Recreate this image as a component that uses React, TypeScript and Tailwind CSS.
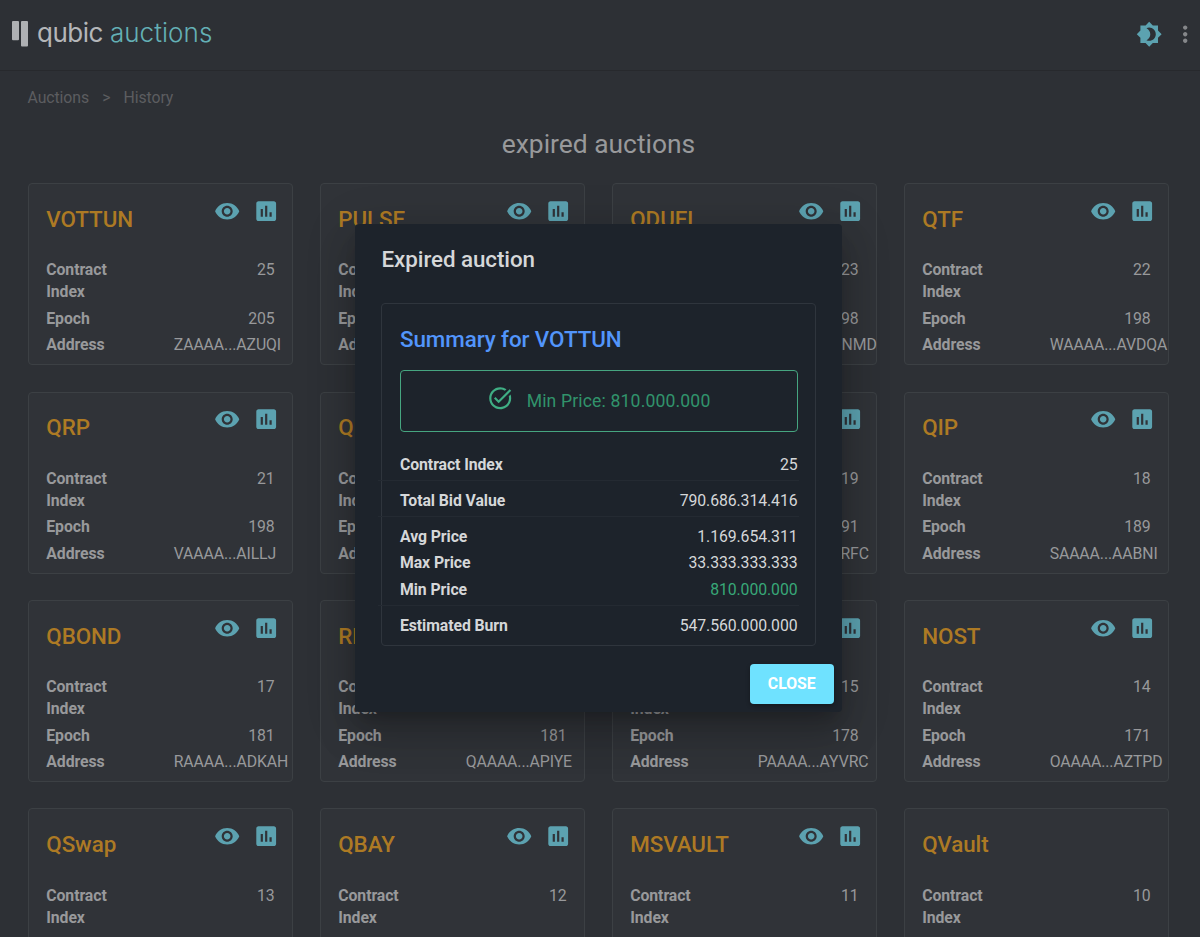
import React from "react";
import {
  MdBrightness4,
  MdInsertChart,
  MdMoreVert,
  MdTaskAlt,
  MdVisibility,
} from "react-icons/md";

type Auction = { name: string; index: number; epoch: number; address: string };

const auctions: Auction[] = [
  { name: "VOTTUN", index: 25, epoch: 205, address: "ZAAAA...AZUQI" },
  { name: "PULSE", index: 24, epoch: 199, address: "YAAAA...AXUXG" },
  { name: "QDUEL", index: 23, epoch: 198, address: "XAAAA...AONMD" },
  { name: "QTF", index: 22, epoch: 198, address: "WAAAA...AVDQA" },
  { name: "QRP", index: 21, epoch: 198, address: "VAAAA...AILLJ" },
  { name: "QRWA", index: 20, epoch: 197, address: "UAAAA...AQRHE" },
  { name: "QRAFFLE", index: 19, epoch: 191, address: "TAAAA...AORFC" },
  { name: "QIP", index: 18, epoch: 189, address: "SAAAA...AABNI" },
  { name: "QBOND", index: 17, epoch: 181, address: "RAAAA...ADKAH" },
  { name: "RL", index: 16, epoch: 181, address: "QAAAA...APIYE" },
  { name: "QDRAW", index: 15, epoch: 178, address: "PAAAA...AYVRC" },
  { name: "NOST", index: 14, epoch: 171, address: "OAAAA...AZTPD" },
  { name: "QSwap", index: 13, epoch: 170, address: "NAAAA...AMAEF" },
  { name: "QBAY", index: 12, epoch: 154, address: "MAAAA...AOKXB" },
  { name: "MSVAULT", index: 11, epoch: 149, address: "LAAAA...AJKLG" },
  { name: "QVault", index: 10, epoch: 138, address: "KAAAA...AUXVB" },
];

function CardRow({ label, value }: { label: string; value: React.ReactNode }) {
  return (
    <div className="flex gap-[26.4px] pb-[4.4px] text-[15.8px] leading-[22px] tracking-[-0.08px]">
      <div className="w-[101px] shrink-0 font-bold">{label}</div>
      <div className="w-[101px] shrink-0 text-right whitespace-nowrap">{value}</div>
    </div>
  );
}

function AuctionCard({ auction }: { auction: Auction }) {
  return (
    <article className="h-[182px] rounded-[4px] border border-[#3c4044] bg-[#303338] pl-[17.6px] text-[#98999b]">
      <div className="flex h-[75.3px] items-start justify-between pr-[12.6px]">
        <h2 className="pt-[19.8px] text-[22.4px] leading-[30px] font-medium tracking-[-0.08px] text-[#ad7a24]">
          {auction.name}
        </h2>
        {auction.index > 10 && (
          <div className="flex gap-[13.2px] pt-[13.6px] text-[#5ca2b0]">
            <MdVisibility size={26.4} />
            <MdInsertChart size={26.4} />
          </div>
        )}
      </div>
      <CardRow label="Contract Index" value={auction.index} />
      <CardRow label="Epoch" value={auction.epoch} />
      <CardRow label="Address" value={auction.address} />
    </article>
  );
}

function SummaryRow({ label, value, good }: { label: string; value: string; good?: boolean }) {
  return (
    <div className="flex h-[26.3px] items-center justify-between pr-[1.5px] pl-[22px] text-[15.8px] tracking-[-0.08px]">
      <span className="font-bold">{label}</span>
      <span className={good ? "text-[#38a878]" : ""}>{value}</span>
    </div>
  );
}

function Divider() {
  return <div className="mt-[2px] mb-[7px] h-px bg-[#242a32]" />;
}

function SummaryDialog() {
  return (
    <section
      role="dialog"
      className="flex h-[488px] w-[487px] flex-col rounded-[4px] bg-[#1d232b] text-[#d5d7d9] shadow-[0_11px_15px_-7px_rgba(0,0,0,0.2),0_24px_38px_3px_rgba(0,0,0,0.14),0_9px_46px_8px_rgba(0,0,0,0.12)]"
    >
      <h2 className="pt-[19.6px] pl-[26.5px] text-[22.4px] leading-[30px] font-medium tracking-[-0.08px]">
        Expired auction
      </h2>
      <div className="mx-[26px] mt-[29.4px] h-[342.4px] rounded-[4px] border border-[#2f353d]">
        <h3 className="pt-[19.5px] pl-[18px] text-[22.4px] leading-[30px] font-medium tracking-[-0.08px] text-[#5295fb]">
          Summary for VOTTUN
        </h3>
        <div className="mr-[17.5px] ml-[18px] mt-[16px] flex h-[62px] items-center justify-center gap-[13.2px] rounded-[4px] border border-[#46a580]">
          <MdTaskAlt size={26.4} className="mb-[5px] text-[#3fae84]" />
          <span className="text-[17.6px] tracking-[0.15px] text-[#31936b]">
            Min Price: 810.000.000
          </span>
        </div>
        <div className="mt-[19.4px] mr-[16px] ml-[-4px]">
          <SummaryRow label="Contract Index" value="25" />
          <Divider />
          <SummaryRow label="Total Bid Value" value="790.686.314.416" />
          <Divider />
          <SummaryRow label="Avg Price" value="1.169.654.311" />
          <SummaryRow label="Max Price" value="33.333.333.333" />
          <SummaryRow label="Min Price" value="810.000.000" good />
          <Divider />
          <SummaryRow label="Estimated Burn" value="547.560.000.000" />
        </div>
      </div>
      <div className="flex justify-end pt-[18px] pr-[8.5px]">
        <button className="h-[40px] w-[83.5px] rounded-[4px] bg-[#6fe2ff] text-[15.8px] font-bold text-white shadow-[0_2px_4px_rgba(0,0,0,0.3)]">
          CLOSE
        </button>
      </div>
    </section>
  );
}

export default function App() {
  return (
    <div className="relative h-[937px] w-[1200px] overflow-hidden bg-[#2d3035] font-[Roboto,sans-serif]">
      <header className="flex h-[71px] items-start justify-between border-b border-[#27292d] pr-[2px] pl-[12px]">
        <div className="flex items-start pt-[14px]">
          <svg width="16" height="34" viewBox="0 0 16 34" fill="#aeb0b3" className="mr-[9px]">
            <rect x="0" y="7" width="7" height="19.2" rx="1" />
            <rect x="9" y="7" width="7" height="25.6" rx="1" />
          </svg>
          <div className="flex gap-[7px] pt-px font-[Inter,sans-serif] text-[26px] leading-[36px]">
            <span className="tracking-[-0.5px] text-[#b4b6b9]">qubic</span>
            <span className="font-light tracking-[0.05px] text-[#64b0b6]">auctions</span>
          </div>
        </div>
        <div className="flex gap-[9px] pt-[21px]">
          <MdBrightness4 size={26.4} className="text-[#5ca2b0]" />
          <MdMoreVert size={26.4} className="text-[#85878a]" />
        </div>
      </header>
      <nav className="flex gap-[13.2px] pt-[15.6px] pl-[27.5px] text-[15.8px] leading-[22px] tracking-[-0.08px] text-[#5c5d60]">
        <span>Auctions</span>
        <span>&gt;</span>
        <span>History</span>
      </nav>
      <h1 className="mt-[17.4px] w-[1197px] text-center text-[26.4px] leading-[36px] text-[#98999b]">
        expired auctions
      </h1>
      <main className="mt-[21.2px] grid grid-cols-[repeat(4,265.6px)] gap-x-[26.4px] gap-y-[26.4px] pl-[27.7px]">
        {auctions.map((a) => (
          <AuctionCard key={a.index} auction={a} />
        ))}
      </main>
      <div className="absolute top-[224.4px] left-[355px]">
        <SummaryDialog />
      </div>
    </div>
  );
}
